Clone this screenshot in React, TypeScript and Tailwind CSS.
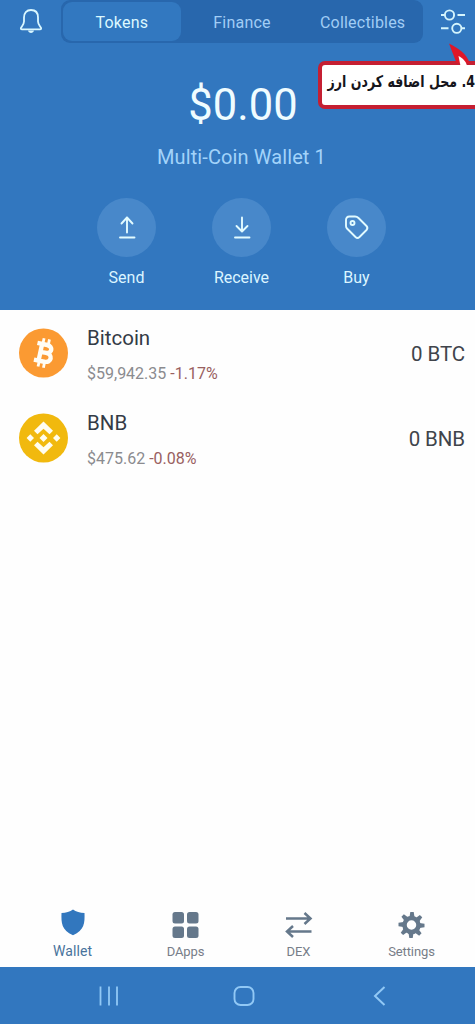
import type { ReactNode } from "react";

function Action({ label, children }: { label: string; children: ReactNode }) {
  return (
    <div className="flex w-[115px] flex-col items-center">
      <div className="flex h-[59px] w-[59px] items-center justify-center rounded-full bg-[#4888ca]">
        <svg
          width="30"
          height="30"
          viewBox="0 0 30 30"
          fill="none"
          stroke="#e2fbff"
          strokeWidth="1.9"
          strokeLinecap="round"
          strokeLinejoin="round"
        >
          {children}
        </svg>
      </div>
      <span className="mt-[10px] text-[16px] leading-[22px] text-[#dcf5ff]">{label}</span>
    </div>
  );
}

interface CoinProps {
  name: string;
  price: string;
  change: string;
  balance: string;
  icon: ReactNode;
}

function Coin({ name, price, change, balance, icon }: CoinProps) {
  return (
    <li className="flex h-[85px] pr-[10px] pl-[19px]">
      <div className="mt-[18px] h-[50px] w-[50px] shrink-0">{icon}</div>
      <div className="ml-[18px] grow pt-[14px]">
        <div className="text-[20.5px] leading-[28px] text-[#343b46]">{name}</div>
        <div className="mt-[11px] text-[16px] leading-[22px] text-[#8b8b8f]">
          {price} <span className="text-[#996060]">{change}</span>
        </div>
      </div>
      <div className="mt-[30px] text-[20.5px] leading-[28px] tracking-[-0.1px] text-[#40444b]">{balance}</div>
    </li>
  );
}

function BitcoinIcon() {
  return (
    <svg width="50" height="50" viewBox="0 0 50 50">
      <circle cx="24.5" cy="25" r="24.5" fill="#fb9a32" />
      <g transform="rotate(12 25 25)" fill="none" stroke="#fffdf5" strokeWidth="4.4">
        <path d="M16.500 16.500H26.500C33 16.500 33 24.500 27 24.500H21.500M27 24.500C34.500 24.500 34.500 33.500 27 33.500H16.500M21.300 16.500V33.500" />
        <path d="M22 10.500V16M27.500 10.500V16M22 34V39.500M27.500 34V39.500" strokeWidth="2.8" />
      </g>
    </svg>
  );
}

function BnbIcon() {
  return (
    <svg width="50" height="50" viewBox="0 0 50 50">
      <circle cx="24.5" cy="25" r="24.5" fill="#f1b90e" />
      <g fill="#fffdf0">
        <path d="M24.500 8.500L34 17.800L30.500 21.300L24.500 15.700L18.500 21.300L15 17.800Z" />
        <path d="M24.500 41.500L34 32.200L30.500 28.700L24.500 34.300L18.500 28.700L15 32.200Z" />
        <path d="M24.500 21L28.500 25L24.500 29L20.500 25Z" />
        <path d="M11.300 21.300L15 25L11.300 28.700L7.600 25Z" />
        <path d="M37.700 21.300L41.400 25L37.700 28.700L34 25Z" />
      </g>
    </svg>
  );
}

function NavItem({ label, active, children }: { label: string; active?: boolean; children: ReactNode }) {
  return (
    <div className="flex w-[113px] flex-col items-center">
      <svg width="30" height="34" viewBox="0 0 30 34">
        {children}
      </svg>
      {active ? (
        <span className="text-[14px] leading-[20px] tracking-[0.1px] text-[#48739c]">{label}</span>
      ) : (
        <span className="mt-[1px] text-[13px] leading-[20px] tracking-[-0.1px] text-[#777d88]">{label}</span>
      )}
    </div>
  );
}

const gearTeeth = [0, 45, 90, 135, 180, 225, 270, 315];

export default function App() {
  return (
    <div className="relative flex h-[1024px] w-[475px] flex-col overflow-hidden bg-[#fefefe] font-['Roboto',sans-serif]">
      <header className="flex h-[310px] shrink-0 flex-col bg-[#3277bf]">
        <div className="flex h-[44px] items-start">
          <div className="flex w-[61px] justify-center pt-[7px]">
            <svg width="26" height="28" viewBox="0 0 26 28" fill="none" stroke="#d9f7ff" strokeWidth="1.8" strokeLinejoin="round">
              <path d="M13 3C8.500 3 6 6 6 10.500V14.500C6 17 4.500 18.500 3 20.800C2.600 21.800 3 22.300 4 22.300H22C23 22.300 23.400 21.800 23 20.800C21.500 18.500 20 17 20 14.500V10.500C20 6 17.500 3 13 3Z" />
              <path d="M10 23.500H16C15.500 26.800 10.500 26.800 10 23.500Z" fill="#d9f7ff" stroke="none" />
            </svg>
          </div>
          <div className="flex h-[43px] w-[362px] rounded-[9px] bg-[#2867ad] p-[2px] text-[16px] leading-[41px] tracking-[0.2px] text-[#a1cdf5]">
            <div className="h-[39px] w-[118px] rounded-[9px] bg-[#3278c0] text-center text-[#dcf8ff]">Tokens</div>
            <div className="w-[122px] pl-[1px] text-center">Finance</div>
            <div className="w-[119px] pl-[2px] text-center">Collectibles</div>
          </div>
          <div className="ml-[17px] pt-[7px]">
            <svg width="28" height="30" viewBox="0 0 28 30" fill="none" stroke="#d5f5fd" strokeWidth="1.9">
              <circle cx="9.500" cy="8" r="4.600" />
              <circle cx="16.800" cy="21.300" r="4.600" />
              <path d="M1 8H5M17.500 8H25M1 21.300H8.500M21.500 21.300H25" />
            </svg>
          </div>
        </div>
        <div className="mt-[35px] pl-[11px] text-center text-[43.5px] leading-[54px] text-[#effcff]">$0.00</div>
        <div className="mt-[10px] pl-[8px] text-center text-[20px] leading-[28px] tracking-[0.1px] text-[#a2d3fa]">
          Multi-Coin Wallet 1
        </div>
        <div className="mt-[27px] flex pl-[69px]">
          <Action label="Send">
            <path d="M15 19.500V4.500M9.500 10.500L15 4.500L20.500 10.500M8 24.500H22.500" />
          </Action>
          <Action label="Receive">
            <path d="M15 4.500V18M9.500 13L15 18.500L20.500 13M8 24.500H22.500" />
          </Action>
          <Action label="Buy">
            <path d="M4 7V13Q4 14.500 5 15.500L13.500 24Q15.500 25.800 17.500 24L24.500 17Q26.300 15 24.500 13L16.500 5Q15 3.500 13 3.500H7.500Q4 3.500 4 7Z" />
            <circle cx="10.500" cy="10" r="2" />
          </Action>
        </div>
      </header>

      <ul className="grow">
        <Coin name="Bitcoin" price="$59,942.35" change="-1.17%" balance="0 BTC" icon={<BitcoinIcon />} />
        <Coin name="BNB" price="$475.62" change="-0.08%" balance="0 BNB" icon={<BnbIcon />} />
      </ul>

      <nav className="flex h-[60px] shrink-0 pl-[16px]">
        <NavItem label="Wallet" active>
          <path d="M15 2.500C18 5 22 5.800 26.500 6C26.800 16 26.500 23 15 28.200C3.500 23 3.200 16 3.500 6C8 5.800 12 5 15 2.500Z" fill="#3277be" />
        </NavItem>
        <NavItem label="DApps">
          <g fill="#65788b">
            <rect x="1.500" y="5" width="11.500" height="11.500" rx="2.500" />
            <rect x="16" y="5" width="11.500" height="11.500" rx="2.500" />
            <rect x="1.500" y="19.500" width="11.500" height="11.500" rx="2.500" />
            <rect x="16" y="19.500" width="11.500" height="11.500" rx="2.500" />
          </g>
        </NavItem>
        <NavItem label="DEX">
          <path
            d="M2 11.500H26M20.500 6L26.500 11.500L20.500 17M27.500 24.500H3.500M9 19L3 24.500L9 30"
            fill="none"
            stroke="#65788b"
            strokeWidth="2.500"
          />
        </NavItem>
        <NavItem label="Settings">
          <g fill="#65788b">
            {gearTeeth.map((angle) => (
              <path key={angle} d="M12.500 10L13.300 5H16.700L17.500 10Z" transform={`rotate(${angle} 14.5 18)`} />
            ))}
          </g>
          <circle cx="14.500" cy="18" r="7" fill="none" stroke="#65788b" strokeWidth="4.500" />
        </NavItem>
      </nav>

      <footer className="flex h-[57px] shrink-0 items-center bg-[#3277bf] pt-[1px] pl-[97px]">
        <svg width="24" height="24" viewBox="0 0 24 24" stroke="#91c8f5" strokeWidth="1.800">
          <path d="M3.500 2.500V21.500M12 2.500V21.500M20 2.500V21.500" />
        </svg>
        <svg className="ml-[111px]" width="24" height="24" viewBox="0 0 24 24" fill="none" stroke="#91c8f5" strokeWidth="1.900">
          <rect x="2.500" y="3" width="19" height="18" rx="6" />
        </svg>
        <svg className="ml-[111px]" width="24" height="24" viewBox="0 0 24 24" fill="none" stroke="#91c8f5" strokeWidth="2">
          <path d="M17.500 3L8 12L17.500 21" />
        </svg>
      </footer>

      <div
        dir="rtl"
        className="absolute top-[61px] left-[318px] h-[48px] w-[170px] rounded-[7px] border-4 border-[#c51f32] bg-white pt-[3px] pr-[9px] font-['DejaVu_Sans_Condensed','DejaVu_Sans',sans-serif] text-[14px] leading-[26px] font-bold whitespace-nowrap text-[#15151b]"
      >
        <span className="inline-block origin-center scale-y-115">4. محل اضافه کردن ارز</span>
      </div>
      <svg className="absolute top-[42px] left-[448px]" width="27" height="26" viewBox="0 0 27 26">
        <path d="M1 1.500L8.500 21H21.500C19 12 10 6 1 1.500Z" fill="#df1728" />
        <path d="M10.500 14L12.500 24H19C18 19 14.500 16 10.500 14Z" fill="#fff" />
      </svg>
    </div>
  );
}
